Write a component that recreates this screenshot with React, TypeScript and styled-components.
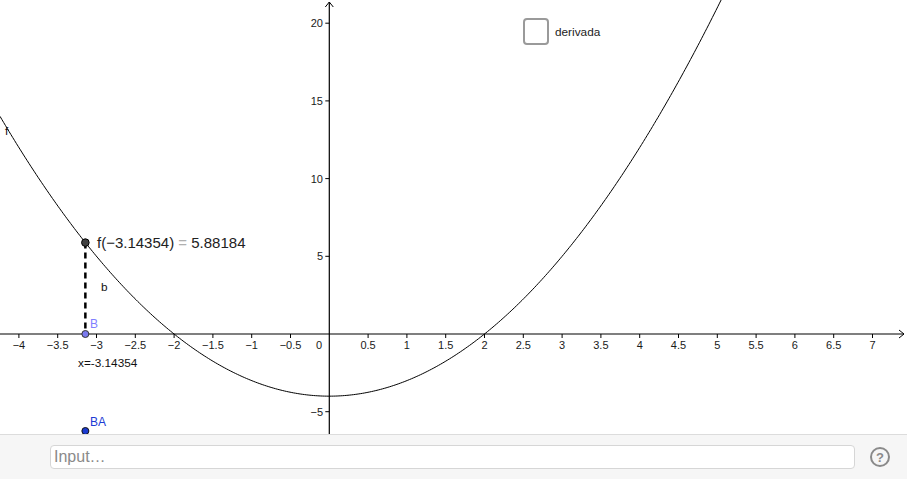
import React from "react";
import styled, { createGlobalStyle } from "styled-components";

const GlobalStyle = createGlobalStyle`
  html, body { margin: 0; padding: 0; background: #fff; overflow: hidden; }
  body { font-family: "Liberation Sans", Arial, sans-serif; }
  * { box-sizing: border-box; }
`;

const W = 907;
const H = 434;
const OX = 329.3;
const OY = 334;
const SX = 77.6;
const SY = 15.54;
const px = (v: number) => OX + v * SX;
const py = (v: number) => OY - v * SY;
const f = (x: number) => x * x - 4;

const App: React.FC = () => {
  return (
    <>
      <GlobalStyle />
      <Page>
        <Canvas>
          <Graph />
          <CheckRow>
            <CheckBox />
            <CheckLabel>derivada</CheckLabel>
          </CheckRow>
        </Canvas>
        <InputBar>
          <InputField placeholder="Input…" />
          <HelpButton aria-label="help">
            <svg width="22" height="22" viewBox="0 0 22 22">
              <circle cx="11" cy="11" r="9" fill="none" stroke="#8a8a8a" strokeWidth="2" />
              <text x="11" y="15.5" textAnchor="middle" fontSize="13" fontWeight="bold" fill="#8a8a8a" fontFamily="Liberation Sans, Arial, sans-serif">?</text>
            </svg>
          </HelpButton>
        </InputBar>
      </Page>
    </>
  );
};

const fmt = (v: number) => {
  const s = Number.isInteger(v) ? String(v) : v.toFixed(1);
  return v < 0 ? "\u2212" + s.slice(1) : s;
};

const Graph: React.FC = () => {
  const xTicks: number[] = [];
  for (let v = -4; v <= 7.001; v += 0.5) {
    const r = Math.round(v * 10) / 10;
    if (r !== 0) xTicks.push(r);
  }
  const yTicks = [20, 15, 10, 5, -5];

  let d = "";
  const x0 = (0 - OX) / SX;
  const x1 = (725 - OX) / SX;
  const n = 400;
  for (let i = 0; i <= n; i++) {
    const x = x0 + ((x1 - x0) * i) / n;
    d += (i === 0 ? "M" : "L") + px(x).toFixed(2) + "," + py(f(x)).toFixed(2) + " ";
  }

  const ax = -3.14354;
  const axp = px(ax);
  const ayp = py(f(ax));

  return (
    <Svg width={W} height={H} viewBox={`0 0 ${W} ${H}`}>
      {/* axes */}
      <line x1={0} y1={OY} x2={904} y2={OY} stroke="#000" strokeWidth={1.2} />
      <polyline points={`899,${OY - 4} 904,${OY} 899,${OY + 4}`} fill="none" stroke="#000" strokeWidth={1} />
      <line x1={OX} y1={H} x2={OX} y2={2} stroke="#000" strokeWidth={1.2} />
      <polyline points={`${OX - 4},7 ${OX},2 ${OX + 4},7`} fill="none" stroke="#000" strokeWidth={1} />

      {xTicks.map((v) => (
        <g key={"x" + v}>
          <line x1={px(v)} y1={OY} x2={px(v)} y2={OY + 4} stroke="#000" strokeWidth={1} />
          <AxisText x={px(v)} y={OY + 15} textAnchor="middle">{fmt(v)}</AxisText>
        </g>
      ))}
      <AxisText x={319} y={OY + 15} textAnchor="middle">0</AxisText>

      {yTicks.map((v) => (
        <g key={"y" + v}>
          <line x1={OX - 4} y1={py(v)} x2={OX} y2={py(v)} stroke="#000" strokeWidth={1} />
          <AxisText x={323} y={py(v) + 4} textAnchor="end">{fmt(v)}</AxisText>
        </g>
      ))}

      {/* function */}
      <path d={d} fill="none" stroke="#000" strokeWidth={1} />
      <LabelText x={5} y={135}>f</LabelText>

      {/* segment b */}
      <line x1={axp} y1={ayp} x2={axp} y2={OY} stroke="#000" strokeWidth={2.5} strokeDasharray="6 4" />
      <LabelText x={101} y={291}>b</LabelText>

      {/* point A on f */}
      <circle cx={axp} cy={ayp} r={3.8} fill="#404040" stroke="#000" strokeWidth={1} />
      <FuncText x={97} y={247.5}>
        f(−3.14354)<tspan fill="#b0b0b0"> = </tspan>5.88184
      </FuncText>

      {/* point B */}
      <circle cx={axp} cy={OY} r={3.5} fill="#7a7aee" stroke="#333" strokeWidth={1} />
      <PointLabel x={90} y={328} fill="#8080ff">B</PointLabel>
      <LabelText x={78} y={367}>x=-3.14354</LabelText>

      {/* point BA */}
      <circle cx={axp} cy={431} r={3.5} fill="#1a3ad0" stroke="#111" strokeWidth={1} />
      <PointLabel x={90} y={426} fill="#1c3cd4">BA</PointLabel>
    </Svg>
  );
};

const Page = styled.div`
  width: 907px;
  height: 479px;
  display: flex;
  flex-direction: column;
  background: #fff;
`;

const Canvas = styled.div`
  position: relative;
  width: 907px;
  height: 434px;
  overflow: hidden;
`;

const Svg = styled.svg`
  display: block;
`;

const AxisText = styled.text`
  font-family: "Liberation Sans", Arial, sans-serif;
  font-size: 11px;
  fill: #1a1a1a;
`;

const LabelText = styled.text`
  font-family: "Liberation Sans", Arial, sans-serif;
  font-size: 11.8px;
  fill: #111;
`;

const FuncText = styled.text`
  font-family: "Liberation Sans", Arial, sans-serif;
  font-size: 15px;
  fill: #222;
`;

const PointLabel = styled.text`
  font-family: "Liberation Sans", Arial, sans-serif;
  font-size: 12px;
`;

const CheckRow = styled.div`
  position: absolute;
  left: 523px;
  top: 18px;
  display: flex;
  align-items: center;
  gap: 6px;
`;

const CheckBox = styled.div`
  width: 26px;
  height: 27px;
  border: 2px solid #9a9a9a;
  border-radius: 4px;
  background: #fff;
`;

const CheckLabel = styled.span`
  font-family: "Liberation Sans", Arial, sans-serif;
  font-size: 11.8px;
  color: #222;
`;

const InputBar = styled.div`
  flex: 1;
  display: flex;
  align-items: center;
  padding: 0 16px 0 50px;
  gap: 14px;
  background: #f6f6f6;
  border-top: 1px solid #dcdcdc;
`;

const InputField = styled.input`
  width: 805px;
  height: 24px;
  border: 1px solid #d6d6d6;
  border-radius: 4px;
  background: #fff;
  padding: 0 3px;
  font-family: "Liberation Sans", Arial, sans-serif;
  font-size: 16px;
  color: #333;
  outline: none;
  &::placeholder { color: #8a8a8a; }
`;

const HelpButton = styled.div`
  width: 22px;
  height: 22px;
  display: flex;
  align-items: center;
  justify-content: center;
`;

export default App;
